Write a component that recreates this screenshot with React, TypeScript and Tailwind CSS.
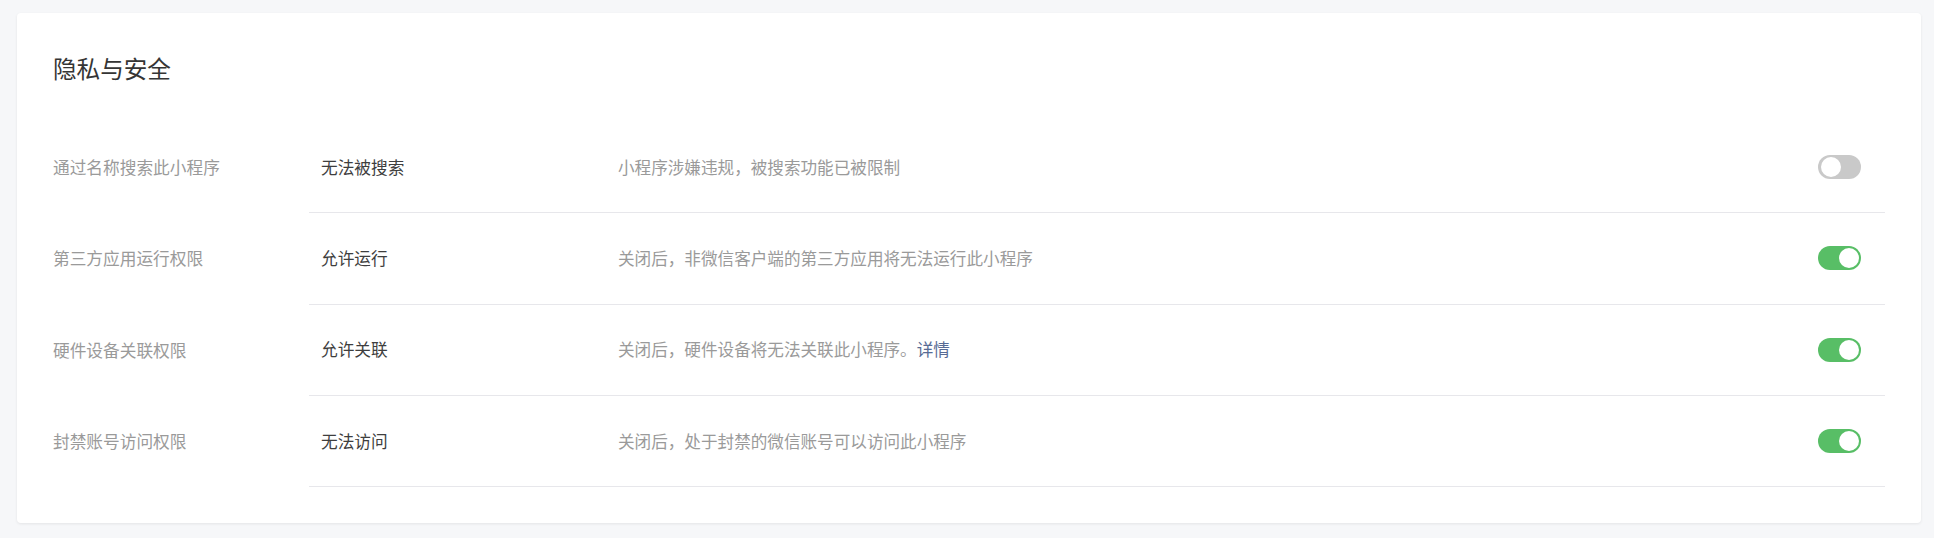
import { useState } from 'react'

type Setting = {
	label: string
	value: string
	desc: string
	link?: string
	enabled: boolean
}

const settings: Setting[] = [
	{ label: '通过名称搜索此小程序', value: '无法被搜索', desc: '小程序涉嫌违规，被搜索功能已被限制', enabled: false },
	{ label: '第三方应用运行权限', value: '允许运行', desc: '关闭后，非微信客户端的第三方应用将无法运行此小程序', enabled: true },
	{ label: '硬件设备关联权限', value: '允许关联', desc: '关闭后，硬件设备将无法关联此小程序。', link: '详情', enabled: true },
	{ label: '封禁账号访问权限', value: '无法访问', desc: '关闭后，处于封禁的微信账号可以访问此小程序', enabled: true },
]

function Toggle({ on }: { on: boolean }) {
	return (
		<div
			className={`relative h-[24px] w-[43px] shrink-0 rounded-full ${on ? 'bg-[#58be66]' : 'bg-[#c9c9c9]'}`}
		>
			<span
				className={`absolute top-[2px] h-[20px] w-[20px] rounded-full bg-white ${on ? 'left-[21px]' : 'left-[3px]'}`}
			/>
		</div>
	)
}

export default function App() {
	const [items] = useState(settings)

	return (
		<div
			className="min-h-[538px] bg-[#f6f7f9] pt-[13px]"
			style={{ fontFamily: '"Noto Sans CJK SC", "Noto Sans", sans-serif' }}
		>
			<div className="ml-[17px] w-[1904px] rounded-[4px] bg-white px-[36px] pt-[39px] pb-[36px] shadow-[0_1px_3px_rgba(0,0,0,0.08)]">
				<h2 className="mb-[38px] h-[32px] text-[23.6px] leading-[32px] text-[#353535]">隐私与安全</h2>

				<div className="flex flex-col">
					{items.map((item) => (
						<div key={item.label} className="flex items-stretch">
							<div className="flex w-[256px] shrink-0 items-center text-[16.7px] text-[#9a9a9a]">
								{item.label}
							</div>
							<div className="flex h-[91.3px] flex-1 items-center border-b border-[#e7e7eb]">
								<div className="w-[309px] shrink-0 pl-[12px] text-[16.7px] text-[#3e3e3e]">{item.value}</div>
								<div className="flex-1 text-[16.6px] text-[#9a9a9a]">
									{item.desc}
									{item.link && <a className="text-[#576b95]">{item.link}</a>}
								</div>
								<div className="mr-[24px]">
									<Toggle on={item.enabled} />
								</div>
							</div>
						</div>
					))}
				</div>
			</div>
		</div>
	)
}
